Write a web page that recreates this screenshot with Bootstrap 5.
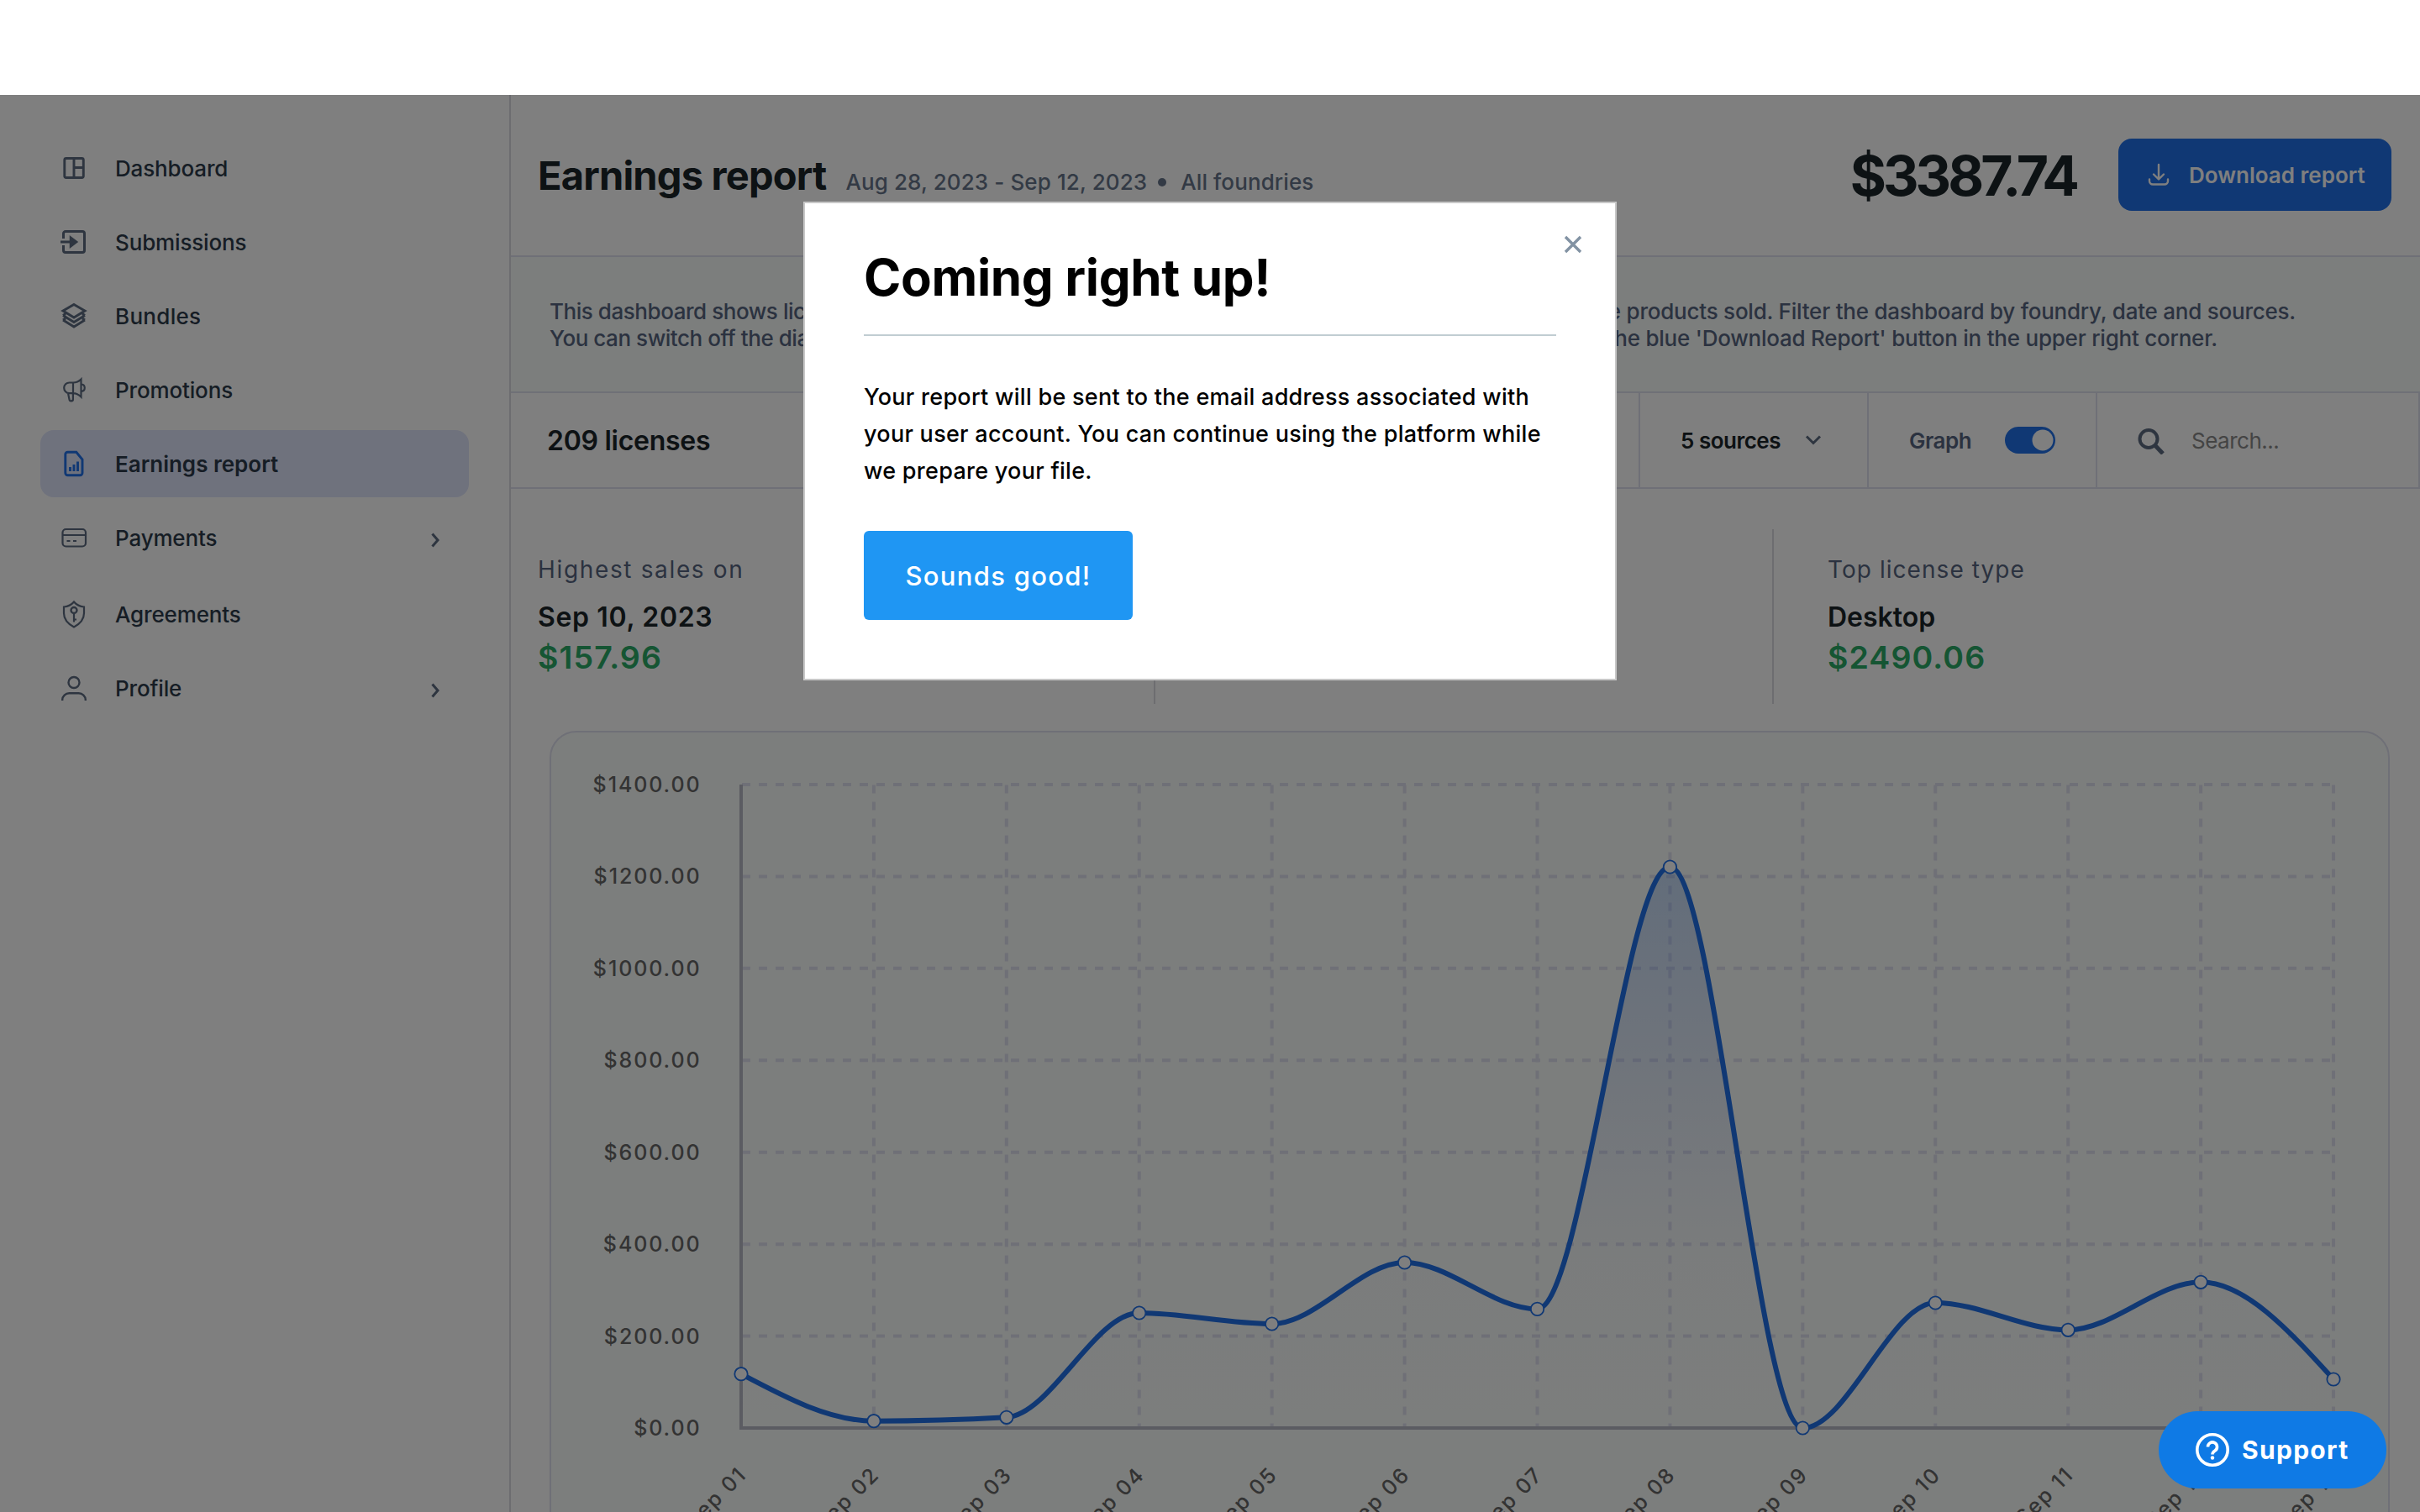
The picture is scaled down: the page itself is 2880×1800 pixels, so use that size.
<!DOCTYPE html>
<html lang="en">
<head>
<meta charset="utf-8">
<title>Earnings report</title>
<link href="https://cdn.jsdelivr.net/npm/bootstrap@5.3.0/dist/css/bootstrap.min.css" rel="stylesheet">
<style>
body{font-family:Inter,"Liberation Sans",sans-serif;width:2880px;height:1800px;overflow:hidden;background:#fff;color:#1a2429;font-size:26px;line-height:32px}
.topbar{height:113px}
.shell{height:1687px}
.side{width:608px;border-right:2px solid #dadbe0;padding:47px 48px 0}
.side-item{height:80px;margin-bottom:8px;border-radius:16px;padding:0 34px 0 22px;gap:31px;color:#2c3a4a;font-weight:500;white-space:nowrap;letter-spacing:-.15px}
.side-item.active{background:#dfe4fa;font-weight:600;letter-spacing:0}
.side-item span{padding-top:2px}
.side-item.gap-top{margin-top:11px}
.side-item svg{fill:none;stroke:#5c6b80;stroke-width:2.9;flex:none}
.side-item .chev{width:12px;height:20px;margin:6px 0 0 auto;stroke-width:3}
.side-item.active svg{stroke:#2070e8}
.line-b{border-bottom:2px solid #dfe0ee}
.head{height:193px;padding:0 34px 0 32px}
.head-title{font-size:47px;font-weight:700;line-height:60px;letter-spacing:-.8px}
.head-sub{color:#66758a;font-weight:500;margin-left:23px;letter-spacing:.1px}
.head-sub i{display:inline-block;width:10px;height:10px;border-radius:50%;background:#66758a;margin:0 17px 4px 13px}
.head-total{font-size:66px;font-weight:700;line-height:80px;margin-right:50px;letter-spacing:-3.97px}
.btn-dl{width:325px;height:86px;margin-bottom:2px;border-radius:16px;background:#2070e8;color:#fff;font-size:26px;font-weight:600;padding:0 0 0 34px;gap:22px;white-space:nowrap}
.btn-dl span{padding-top:1px}
.info{height:162px;background:#f9fcfa;padding:2px 148px 0 46px;color:#566580;font-weight:500;white-space:nowrap;letter-spacing:-.23px}
.info .lead-in{letter-spacing:-.45px}
.info .short{margin-right:93px}
.filters{height:114px;white-space:nowrap}
.f-count{padding:2px 0 0 43px;font-size:32px;font-weight:600;letter-spacing:-.28px}
.f-cell{width:272px;border-left:2px solid #dfe0ee;padding-left:48px}
.f-cell span{font-weight:600;padding-top:1px;letter-spacing:-.5px}
.f-search{width:386px;padding-left:46px;border-right:2px solid #dfe0ee}
.f-search span{font-weight:400;color:#888}
.stats{height:208px;margin:48px 0 32px;white-space:nowrap}
.stat{padding:28px 0 0 32px;width:765px}
.stat+.stat{border-left:2px solid #dadbe0;padding-left:64px;width:736px}
.s-lab{color:#566580;font-size:28px;line-height:40px;margin-bottom:14px;letter-spacing:1.65px}
.s-lab.tight{letter-spacing:1.05px}
.s-val{font-size:32px;font-weight:600;line-height:46px;letter-spacing:.65px}
.s-val.tight{letter-spacing:0}
.s-amt{font-size:37.5px;font-weight:600;line-height:50px;color:#2aaa66;letter-spacing:1.1px}
.chart{margin:0 36px 0 46px;height:960px;border:2px solid #dfe0ee;border-radius:32px;background:#f9fcfa;overflow:hidden}
.chart text{font-size:25px;fill:#666;font-weight:500;letter-spacing:1.9px}
.veil{top:113px;left:0;right:0;bottom:0;background:rgba(0,0,0,.5)}
.dialog{width:968px;height:570px;margin-top:127px;border:2px solid #c8c8c8;background:#fff;padding:50px 70px 0;color:#000;white-space:nowrap}
.dlg-title{font-size:60px;font-weight:700;line-height:76px;margin:0 0 30px;letter-spacing:-.35px}
.dlg-line{height:2px;background:#c1cdd2;margin-bottom:51px}
.dlg-text{font-size:27px;font-weight:500;line-height:44px;margin:0 0 49px;letter-spacing:.28px}
.btn-ok{width:320px;height:106px;border-radius:6px;background:#1f96f3;color:#fff;font-size:31px;font-weight:500;letter-spacing:1.3px;padding-top:8px}
.dlg-x{top:37px;right:38px}
.support{left:2569px;top:1680px;width:271px;height:92px;background:#0f7ae5;color:#fff;font-size:30px;font-weight:700;letter-spacing:1.3px;padding-left:43px;gap:14px}
</style>
</head>
<body class="position-relative">
<div class="topbar"></div>
<div class="shell d-flex">
  <nav class="side flex-shrink-0">
    <div class="side-item d-flex align-items-center"><svg width="36" height="36"><rect x="6.800" y="6.500" width="22.500" height="23" rx="2"/><path d="M18 6.500v23M18 17.500h12"/></svg><span>Dashboard</span></div>
    <div class="side-item d-flex align-items-center"><svg width="36" height="36"><path stroke-width="3" d="M5.500 14V8a2.500 2.500 0 0 1 2.500-2.500h20a2.500 2.500 0 0 1 2.500 2.500v20a2.500 2.500 0 0 1-2.500 2.500H8A2.500 2.500 0 0 1 5.500 28v-6M2 18h11"/><path d="M13.500 11.500l8.500 6.500-8.500 6.500z" fill="#5c6b80" stroke-width="1.500"/></svg><span>Submissions</span></div>
    <div class="side-item d-flex align-items-center"><svg width="36" height="36"><path d="M18 4.500 31 12 18 20 5 12zM5 17.500l13 8 13-8M5 17.500l3-2M31 17.500l-3-2M5 23l13 8 13-8M5 23l3-2M31 23l-3-2"/></svg><span style="letter-spacing:.3px">Bundles</span></div>
    <div class="side-item d-flex align-items-center"><svg width="36" height="36"><path stroke-width="2.200" d="M17 9.500h-4.500a6.300 6.300 0 0 0 0 12.600H17zM17 9.500c4 0 7-1.500 9.500-4v21c-2.500-2.500-5.500-4.400-9.500-4.400M27 11.500c5 .5 5 8 0 8.500M11 22l1.500 7.500a2.200 2.200 0 0 0 4.400-.5V22"/></svg><span>Promotions</span></div>
    <div class="side-item active d-flex align-items-center"><svg width="36" height="36"><path d="M10.500 4.300h10.300L28 13v16a2.700 2.700 0 0 1-2.700 2.700H10.500A2.700 2.700 0 0 1 7.800 29V7a2.700 2.700 0 0 1 2.700-2.700zM13.500 22v5M18 19v8M22.500 15.500V27"/></svg><span>Earnings report</span></div>
    <div class="side-item d-flex align-items-center"><svg width="36" height="36"><rect stroke-width="2.200" x="4.500" y="8" width="27.500" height="20.500" rx="4"/><path stroke-width="2.200" d="M4.500 15H32M9.500 22h4M17 22h4"/></svg><span>Payments</span><svg class="chev"><path d="M2.500 2.500 9 10l-6.500 7.500"/></svg></div>
    <div class="side-item gap-top d-flex align-items-center"><svg width="36" height="36"><path stroke-width="2.200" d="M18 3.500c3 3.500 7 5.500 12 6v7.500c0 7.500-5.500 13-12 16.500C11.500 30 6 24.500 6 17V9.500c5-.5 9-2.500 12-6zM18 17.500v10M18 24.500h3"/><circle stroke-width="2.400" cx="18" cy="13.500" r="3.500"/></svg><span>Agreements</span></div>
    <div class="side-item d-flex align-items-center"><svg width="36" height="36"><circle stroke-width="2.400" cx="18" cy="11.500" r="6.500"/><path stroke-width="2.400" d="M4.200 33v-1a8 8 0 0 1 8-7.700h11.600a8 8 0 0 1 8 7.700v1"/></svg><span>Profile</span><svg class="chev"><path d="M2.500 2.500 9 10l-6.500 7.500"/></svg></div>
  </nav>
  <main class="flex-grow-1">
    <header class="head line-b d-flex align-items-center justify-content-between">
      <div class="d-flex align-items-baseline text-nowrap"><span class="head-title">Earnings report</span><span class="head-sub">Aug 28, 2023 - Sep 12, 2023<i></i>All foundries</span></div>
      <div class="d-flex align-items-center"><span class="head-total">$3387.74</span>
      <button class="btn btn-dl d-flex align-items-center border-0"><svg width="28" height="28" fill="none" stroke="#fff" stroke-width="2.400" stroke-linecap="round" stroke-linejoin="round"><path d="M14 2v17M8 13.500l6 6 6-6M3 19.500v2a4 4 0 0 0 4 4h14a4 4 0 0 0 4-4v-2"/></svg><span>Download report</span></button></div>
    </header>
    <section class="info line-b d-flex flex-column justify-content-center">
      <div class="d-flex justify-content-between"><span class="lead-in">This dashboard shows lic</span><span>the products sold. Filter the dashboard by foundry, date and sources.</span></div>
      <div class="d-flex justify-content-between"><span class="lead-in">You can switch off the dia</span><span class="short">the blue 'Download Report' button in the upper right corner.</span></div>
    </section>
    <section class="filters line-b d-flex align-items-stretch">
      <div class="f-count flex-grow-1 d-flex align-items-center">209 licenses</div>
      <div class="f-cell d-flex align-items-center" style="gap:29px"><span>5 sources</span><svg width="20" height="14" fill="none" stroke="#5c6b80" stroke-width="3"><path d="M2 2.500l8 8 8-8"/></svg></div>
      <div class="f-cell d-flex align-items-center" style="gap:40px;color:#566580"><span>Graph</span><svg width="60" height="32"><rect width="60" height="32" rx="16" fill="#2070e8"/><circle cx="45" cy="16" r="12.500" fill="#fff"/></svg></div>
      <div class="f-cell f-search d-flex align-items-center" style="gap:31px"><svg width="35" height="34" fill="none" stroke="#5c6b80"><circle cx="15" cy="15.500" r="10.500" stroke-width="4"/><path d="M22.500 23l9.500 10" stroke-width="5"/></svg><span>Search...</span></div>
    </section>
    <section class="stats d-flex">
      <div class="stat"><div class="s-lab">Highest sales on</div><div class="s-val">Sep 10, 2023</div><div class="s-amt">$157.96</div></div>
      <div class="stat"></div>
      <div class="stat"><div class="s-lab tight">Top license type</div><div class="s-val tight">Desktop</div><div class="s-amt">$2490.06</div></div>
    </section>
    <div class="chart"><svg id="plot" width="2186" height="928" viewBox="656 872 2186 928"></svg></div>
  </main>
</div>
<div class="veil position-absolute d-flex justify-content-center align-items-start">
  <div class="dialog position-relative">
    <svg class="dlg-x position-absolute" width="24" height="24" stroke="#8292a3" stroke-width="3.400"><path d="M3 3l18 18M21 3L3 21"/></svg>
    <h1 class="dlg-title">Coming right up!</h1>
    <div class="dlg-line"></div>
    <p class="dlg-text">Your report will be sent to the email address associated with<br>your user account. You can continue using the platform while<br>we prepare your file.</p>
    <button class="btn btn-ok border-0">Sounds good!</button>
  </div>
</div>
<div class="support position-absolute rounded-pill d-flex align-items-center"><svg width="42" height="42" fill="none" stroke="#fff" stroke-width="3.600"><circle cx="21" cy="21" r="18.200"/><path d="M15.500 17.500a5.500 5.500 0 1 1 8.500 4.600c-2 1.300-3 2-3 4.400"/><circle cx="21" cy="30.500" r="2.200" fill="#fff" stroke="none"/></svg><span>Support</span></div>
<script src="https://cdn.jsdelivr.net/npm/bootstrap@5.3.0/dist/js/bootstrap.bundle.min.js"></script>
<script>
// Daily earnings drawn as a monotone cubic line with a fading area below it
const ys=[1635.7,1691.7,1687.3,1563,1576,1503,1558.4,1032,1700,1551,1583.3,1526.3,1642];
const X=i=>882+157.92*i,n=ys.length;
const d=[],m=[];
for(let i=0;i<n-1;i++)d.push((ys[i+1]-ys[i])/157.92);
for(let i=1;i<n-1;i++)m[i]=d[i-1]*d[i]<=0?0:(Math.sign(d[i])*Math.min(Math.abs(d[i-1]),Math.abs(d[i]),.25*Math.abs(d[i-1]+d[i]))*2);
m[0]=(3*d[0]-m[1])/2;m[n-1]=(3*d[n-2]-m[n-2])/2;
let p=`M${X(0)} ${ys[0]}`;const h=157.92/3;
for(let i=0;i<n-1;i++)p+=`C${X(i)+h} ${ys[i]+m[i]*h} ${X(i+1)-h} ${ys[i+1]-m[i+1]*h} ${X(i+1)} ${ys[i+1]}`;
let s='<defs><linearGradient id="fade" gradientUnits="userSpaceOnUse" x1="0" y1="1032" x2="0" y2="1700"><stop offset="0" stop-color="#2070e8" stop-opacity=".24"/><stop offset=".7" stop-color="#4060d8" stop-opacity=".02"/><stop offset="1" stop-color="#4060d8" stop-opacity="0"/></linearGradient></defs><g stroke="#dfe0ee" stroke-width="4" stroke-dasharray="10 10">';
for(let i=0;i<7;i++){const y=934+i*109.43;s+=`<path d="M883 ${y}H2777"/>`}
for(let i=1;i<n;i++)s+=`<path d="M${X(i)} 934.500V1700"/>`;
s+=`</g><path d="M882 934V1702M882 1700H2777" stroke="#b6b8c4" stroke-width="4" fill="none"/><path d="${p}V1700H882Z" fill="url(#fade)"/><path d="${p}" fill="none" stroke="#2070e8" stroke-width="6"/>`;
for(let i=0;i<n;i++)s+=`<circle cx="${X(i)}" cy="${ys[i]}" r="7.700" fill="#fff" stroke="#2070e8" stroke-width="1.800"/><text transform="translate(${X(i)+8} 1757) rotate(-45)" text-anchor="end">Sep ${String(i+1).padStart(2,'0')}</text>`;
for(let i=0;i<8;i++)s+=`<text x="834.500" y="${943+i*109.43}" text-anchor="end">$${1400-200*i}.00</text>`;
document.getElementById('plot').innerHTML=s;
</script>
</body>
</html>
